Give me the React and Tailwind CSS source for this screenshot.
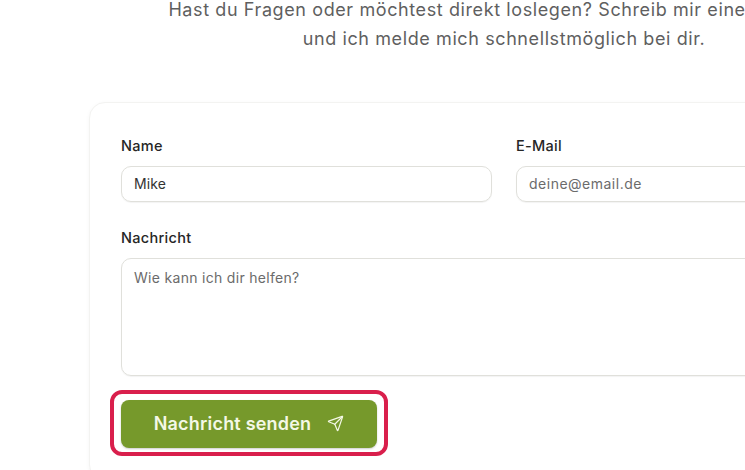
import React from 'react'
import { Send } from 'lucide-react'

const font = "font-['Inter','Open_Sans',sans-serif]"
const labelClass = 'block text-[14.5px] leading-[20px] font-medium tracking-[0.3px] text-[#262626]'
const fieldClass = 'rounded-[10px] border border-[#e0e0db] text-[14px] shadow-[0_1px_1px_rgba(0,0,0,0.05)]'

const App = () => {
    return (
        <div className={`h-[470px] w-[745px] overflow-hidden bg-white ${font}`}>
            <div className="w-[1008px]">
                <p className="mx-auto -mt-[5px] w-[760px] text-center text-[18px] leading-[29px] tracking-[0.6px] text-[#5f5f5f]">
                    Hast du Fragen oder möchtest direkt loslegen? Schreib mir eine Nachricht<br />
                    und ich melde mich schnellstmöglich bei dir.
                </p>
                <div className="mx-auto mt-[49px] w-[830px] rounded-2xl border border-[#f3f3f1] bg-white px-[31px] pt-[33px] pb-6 shadow-[0_1px_4px_rgba(0,0,0,0.04)]">
                    <div className="grid grid-cols-2 gap-6">
                        <div>
                            <label className={`${labelClass} mb-[10px]`}>Name</label>
                            <div className={`${fieldClass} flex h-[36px] items-center px-3 pb-[2px] tracking-[0.1px] text-[#333]`}>Mike</div>
                        </div>
                        <div>
                            <label className={`${labelClass} mb-[10px]`}>E-Mail</label>
                            <div className={`${fieldClass} flex h-[36px] items-center px-3 pb-[2px] tracking-[0.5px] text-[#6b6b6b]`}>deine@email.de</div>
                        </div>
                    </div>
                    <label className={`${labelClass} mt-[26px] mb-[10px]`}>Nachricht</label>
                    <div className={`${fieldClass} h-[118px] px-3 pt-[9px] leading-[20px] tracking-[0.3px] text-[#6b6b6b]`}>Wie kann ich dir helfen?</div>
                    <div className="mt-[14px] -ml-[11px] w-fit rounded-[12px] border-4 border-[#d91f4c] px-[7px] pt-[6px] pb-[4px]">
                        <button type="button" className="flex h-[48px] w-[256px] items-center justify-center gap-4 rounded-lg bg-[#76992b] pb-[2px] text-[18px] font-semibold tracking-[0.2px] text-[#f4f8e6] shadow-[0_1px_2px_rgba(0,0,0,0.2)]">
                            Nachricht senden
                            <Send size={17} strokeWidth={1.75} />
                        </button>
                    </div>
                </div>
            </div>
        </div>
    )
}

export default App
